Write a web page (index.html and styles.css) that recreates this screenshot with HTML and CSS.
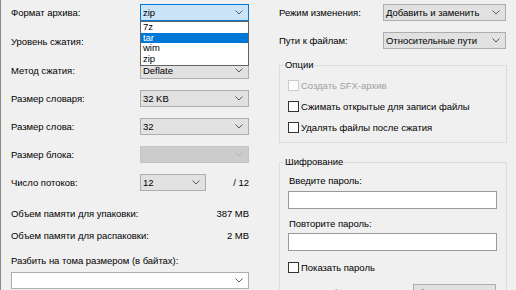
FILE: index.html
```html
<!DOCTYPE html>
<html lang="ru">
<head>
<meta charset="utf-8">
<title>Добавить к архиву</title>
<link rel="stylesheet" href="styles.css">
</head>
<body>
<div class="dialog">
  <div class="col left">
    <div class="row r1">
      <span class="lbl">Формат архива:</span>
      <div class="combo-wrap">
        <div class="combo focus"><span>zip</span><svg class="chev" width="8" height="5" viewBox="0 0 8 5"><path d="M0.5 0.5 L4 4 L7.5 0.5"/></svg></div>
        <ul class="dropdown">
          <li>7z</li>
          <li class="sel">tar</li>
          <li>wim</li>
          <li>zip</li>
        </ul>
      </div>
    </div>
    <div class="row r2">
      <span class="lbl">Уровень сжатия:</span>
      <div class="combo"><span></span><svg class="chev" width="8" height="5" viewBox="0 0 8 5"><path d="M0.5 0.5 L4 4 L7.5 0.5"/></svg></div>
    </div>
    <div class="row">
      <span class="lbl">Метод сжатия:</span>
      <div class="combo"><span>Deflate</span><svg class="chev" width="8" height="5" viewBox="0 0 8 5"><path d="M0.5 0.5 L4 4 L7.5 0.5"/></svg></div>
    </div>
    <div class="row">
      <span class="lbl">Размер словаря:</span>
      <div class="combo"><span>32 KB</span><svg class="chev" width="8" height="5" viewBox="0 0 8 5"><path d="M0.5 0.5 L4 4 L7.5 0.5"/></svg></div>
    </div>
    <div class="row">
      <span class="lbl">Размер слова:</span>
      <div class="combo"><span>32</span><svg class="chev" width="8" height="5" viewBox="0 0 8 5"><path d="M0.5 0.5 L4 4 L7.5 0.5"/></svg></div>
    </div>
    <div class="row">
      <span class="lbl">Размер блока:</span>
      <div class="combo disabled"><span></span><svg class="chev" width="8" height="5" viewBox="0 0 8 5"><path d="M0.5 0.5 L4 4 L7.5 0.5"/></svg></div>
    </div>
    <div class="row threads">
      <span class="lbl">Число потоков:</span>
      <div class="combo short"><span>12</span><svg class="chev" width="8" height="5" viewBox="0 0 8 5"><path d="M0.5 0.5 L4 4 L7.5 0.5"/></svg></div>
      <span class="of">/ 12</span>
    </div>
    <div class="mem m1"><span>Объем памяти для упаковки:</span><span>387 MB</span></div>
    <div class="mem m2"><span>Объем памяти для распаковки:</span><span>2 MB</span></div>
    <div class="split-lbl">Разбить на тома размером (в байтах):</div>
    <div class="combo wide edit"><span></span><svg class="chev" width="8" height="5" viewBox="0 0 8 5"><path d="M0.5 0.5 L4 4 L7.5 0.5"/></svg></div>
  </div>

  <div class="col right">
    <div class="row rr1">
      <span class="rlbl">Режим изменения:</span>
      <div class="combo rcombo"><span>Добавить и заменить</span><svg class="chev" width="8" height="5" viewBox="0 0 8 5"><path d="M0.5 0.5 L4 4 L7.5 0.5"/></svg></div>
    </div>
    <div class="row rr2">
      <span class="rlbl">Пути к файлам:</span>
      <div class="combo rcombo"><span>Относительные пути</span><svg class="chev" width="8" height="5" viewBox="0 0 8 5"><path d="M0.5 0.5 L4 4 L7.5 0.5"/></svg></div>
    </div>

    <fieldset class="group options">
      <legend>Опции</legend>
      <div class="gbody">
        <label class="check disabled"><span class="box"></span>Создать SFX-архив</label>
        <label class="check"><span class="box"></span>Сжимать открытые для записи файлы</label>
        <label class="check"><span class="box"></span>Удалять файлы после сжатия</label>
      </div>
    </fieldset>

    <fieldset class="group enc">
      <legend>Шифрование</legend>
      <div class="gbody">
        <div class="elbl first">Введите пароль:</div>
        <div class="input"></div>
        <div class="elbl second">Повторите пароль:</div>
        <div class="input"></div>
        <label class="check show"><span class="box"></span>Показать пароль</label>
        <div class="row method">
          <span class="mlbl">Метод шифрования:</span>
          <div class="combo mcombo"><span>ZipCrypto</span><svg class="chev" width="8" height="5" viewBox="0 0 8 5"><path d="M0.5 0.5 L4 4 L7.5 0.5"/></svg></div>
        </div>
      </div>
    </fieldset>
  </div>
</div>
</body>
</html>
```

FILE: styles.css
```css
* { box-sizing: border-box; }

html, body {
  margin: 0;
  padding: 0;
  background: #f0f0f0;
}

body {
  width: 516px;
  height: 290px;
  overflow: hidden;
  font-family: "Liberation Sans", Arial, sans-serif;
  font-size: 9.5px;
  letter-spacing: -0.03px;
  color: #000;
}

.dialog {
  display: flex;
  width: 516px;
  height: 290px;
  border-left: 1px solid #8a8a8a;
  overflow: hidden;
}

.col { display: flex; flex-direction: column; }

.left {
  width: 249px;
  padding: 4px 0 0 10px;
}

.right {
  width: 228px;
  margin-left: 29px;
  padding-top: 4px;
}

.row {
  display: flex;
  align-items: center;
  height: 17px;
  margin-bottom: 11px;
  flex: none;
}

.row.r1, .row.r2 { margin-bottom: 12px; }

.lbl { width: 129px; white-space: nowrap; }

.combo-wrap { position: relative; }

.combo {
  width: 109px;
  height: 17px;
  border: 1px solid #adadad;
  background: #e1e1e1;
  display: flex;
  align-items: center;
  justify-content: space-between;
  padding: 0 5px 0 2px;
  white-space: nowrap;
  flex: none;
}

.combo.focus {
  background: #cce4f7;
  border-color: #0078d7;
}

.combo.disabled {
  background: #cccccc;
  border-color: #c4c4c4;
}

.combo.disabled .chev path { stroke: #b0b0b0; }

.chev { flex: none; }
.chev path { fill: none; stroke: #5a5a5a; stroke-width: 1; }

.combo.short { width: 66px; }

.of { flex: 1; text-align: right; padding-right: 1px; }

.dropdown {
  position: absolute;
  left: 0;
  top: 17px;
  width: 109px;
  margin: 0;
  padding: 0;
  list-style: none;
  background: #fff;
  border: 1px solid #646464;
  z-index: 2;
}

.dropdown li {
  height: 10.7px;
  line-height: 10.7px;
  padding-left: 2px;
}

.dropdown li.sel {
  background: #0078d7;
  color: #fff;
}

.threads { margin-bottom: 15px; }

.mem {
  display: flex;
  justify-content: space-between;
  height: 15px;
  line-height: 15px;
  padding-right: 1px;
  white-space: nowrap;
  flex: none;
}

.mem.m1 { margin-bottom: 7px; }
.mem.m2 { margin-bottom: 10px; }

.split-lbl {
  height: 15px;
  line-height: 15px;
  margin-bottom: 4px;
  white-space: nowrap;
  flex: none;
}

.combo.wide { width: 238px; }
.combo.edit { background: #fff; border-color: #adadad; }

/* right column */
.rlbl { width: 104px; white-space: nowrap; }
.combo.rcombo { width: 123px; }
.row.rr2 { margin-bottom: 0; }

.group {
  margin: 0;
  padding: 0;
  border: 1px solid #dcdcdc;
  min-width: 0;
  flex: none;
}

.group legend {
  margin-left: 4px;
  padding: 0 1px;
  line-height: 12px;
  height: 12px;
}

.options { margin-top: 10px; }

.options .gbody {
  padding: 8px 8px 8px 8px;
  display: flex;
  flex-direction: column;
  gap: 8px;
}

.check {
  display: flex;
  align-items: center;
  height: 13px;
  white-space: nowrap;
}

.check .box {
  width: 11px;
  height: 11px;
  border: 1px solid #333;
  background: #fff;
  margin-right: 2px;
  flex: none;
}

.check.disabled { color: #a0a0a0; }
.check.disabled .box { border-color: #cccccc; background: #fcfcfc; }

.enc { margin-top: 13px; }

.enc .gbody {
  padding: 6px 9px 10px 8px;
  display: flex;
  flex-direction: column;
}

.elbl {
  height: 13px;
  line-height: 13px;
  padding-left: 1px;
  margin-bottom: 4px;
  white-space: nowrap;
}

.elbl.second { margin-bottom: 3.5px; }

.input {
  height: 18px;
  border: 1px solid #999;
  background: #fff;
  margin-bottom: 7.5px;
}

.check.show { margin-top: 2.5px; margin-bottom: 10px; }

.method { margin-bottom: 0; }
.mlbl { width: 125px; padding-left: 1px; white-space: nowrap; }
.combo.mcombo { width: 83px; }
```
